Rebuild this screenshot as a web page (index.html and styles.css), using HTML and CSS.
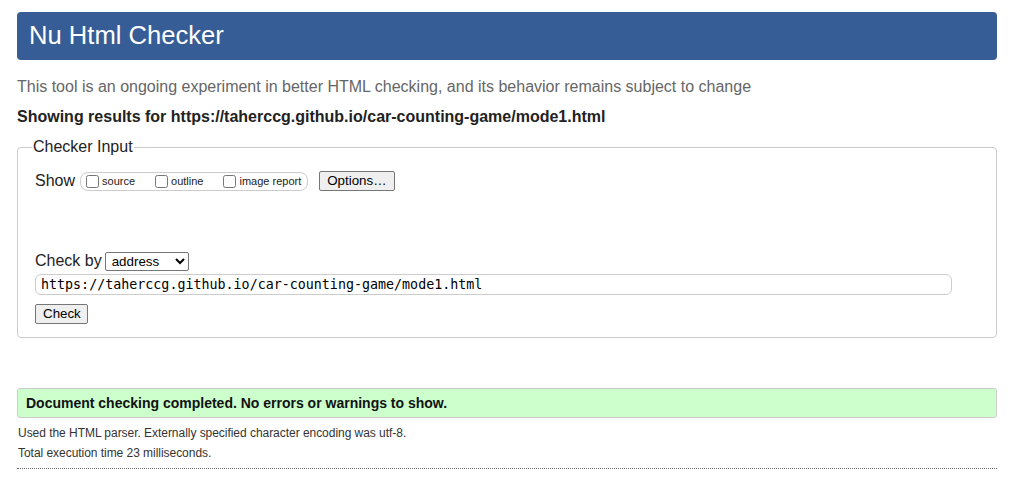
FILE: index.html
```html
<!DOCTYPE html>
<html lang="en">
<head>
<meta charset="utf-8">
<title>Nu Html Checker</title>
<link rel="stylesheet" href="styles.css">
</head>
<body>
<h1 class="banner">Nu Html Checker</h1>
<p class="intro">This tool is an ongoing experiment in better HTML checking, and its behavior remains subject to change</p>
<p class="showing">Showing results for https://taherccg.github.io/car-counting-game/mode1.html</p>
<form class="form">
<fieldset class="inputs">
<legend class="legend">Checker Input</legend>
<div class="row show-row">
<span class="label">Show</span>
<span class="group">
<label class="opt"><input type="checkbox" class="cb">source</label>
<label class="opt"><input type="checkbox" class="cb">outline</label>
<label class="opt"><input type="checkbox" class="cb">image report</label>
</span>
<button type="button" class="btn options">Options…</button>
</div>
<div class="spacer"></div>
<div class="row by-row">
<span class="label">Check by</span>
<select class="select"><option>address</option></select>
</div>
<input class="url" type="text" value="https://taherccg.github.io/car-counting-game/mode1.html">
<div class="row">
<button type="button" class="btn check">Check</button>
</div>
</fieldset>
</form>
<p class="success">Document checking completed. No errors or warnings to show.</p>
<p class="details">Used the HTML parser. Externally specified character encoding was utf-8.</p>
<p class="details">Total execution time 23 milliseconds.</p>
<hr class="rule">
</body>
</html>
```

FILE: styles.css
```css
html { background: #fff; }
body {
  margin: 0;
  padding: 12px 14px 0 17px;
  font-family: "Liberation Sans", Arial, sans-serif;
  color: #222;
}
.banner {
  margin: 0;
  height: 48px;
  line-height: 47px;
  padding: 0 12px;
  background: #365d95;
  color: #fff;
  font-size: 25.6px;
  font-weight: normal;
  border-radius: 4px;
}
.intro {
  margin: 17px 0 0;
  font-size: 16px;
  line-height: 20px;
  color: #666;
}
.showing {
  margin: 10px 0 0;
  font-size: 16px;
  line-height: 20px;
  font-weight: bold;
  color: #222;
}
.form { margin: 0; }
.inputs {
  margin: 10px 0 0;
  padding: 4px 17px 13px 17px;
  border: 1px solid #ccc;
  border-radius: 4px;
}
.legend {
  padding: 0 1px;
  margin-left: -3px;
  font-size: 16px;
  line-height: 20px;
  color: #222;
}
.row {
  display: flex;
  align-items: center;
}
.label { font-size: 16px; line-height: 20px; }
.show-row { height: 20px; margin-top: 10px; }
.group {
  display: inline-flex;
  align-items: center;
  margin-left: 5px;
  height: 17px;
  padding: 0 6px 0 1px;
  border: 1px solid #ccc;
  border-radius: 8px;
}
.opt {
  display: inline-flex;
  align-items: center;
  font-size: 11px;
  color: #222;
  margin-right: 16px;
}
.opt:last-child { margin-right: 0; }
.cb {
  margin: 0 3px 0 4px;
  width: 13px;
  height: 13px;
}
.btn {
  font-family: "Liberation Sans", Arial, sans-serif;
  font-size: 13.333px;
  color: #000;
  background: #efefef;
  border: 1px solid #767676;
  border-radius: 2px;
  padding: 1px 6px;
  height: 20px;
  line-height: 16px;
}
.options { margin-left: 11px; padding: 1px 7px; }
.spacer { height: 60px; }
.by-row { height: 20px; }
.select {
  margin-left: 3px;
  width: 84px;
  height: 19px;
  font-family: "Liberation Sans", Arial, sans-serif;
  font-size: 13.333px;
  color: #000;
  background: #fff;
  border: 1px solid #767676;
  border-radius: 2px;
  padding: 0 0 0 2px;
}
.url {
  display: block;
  box-sizing: border-box;
  margin: 3px 0 0;
  width: 917px;
  height: 21px;
  padding: 0 5px;
  font-family: "DejaVu Sans Mono", monospace;
  font-size: 13.333px;
  color: #000;
  border: 1px solid #ccc;
  border-radius: 6px;
}
.check { margin-top: 9px; padding: 1px 6px 1px 7px; }
.success {
  margin: 50px 0 0;
  height: 28px;
  line-height: 28px;
  padding: 0 8px;
  background: #ccffcc;
  border: 1px solid #ccc;
  border-radius: 3px;
  font-size: 14px;
  font-weight: bold;
  color: #111;
}
.details {
  margin: 8px 0 0 1px;
  font-size: 12px;
  line-height: 14px;
  color: #333;
  letter-spacing: -0.04px;
}
.details + .details { margin-top: 6px; }
.rule {
  margin: 8px 0 0;
  border: 0;
  border-top: 1px dotted #666;
}
```
